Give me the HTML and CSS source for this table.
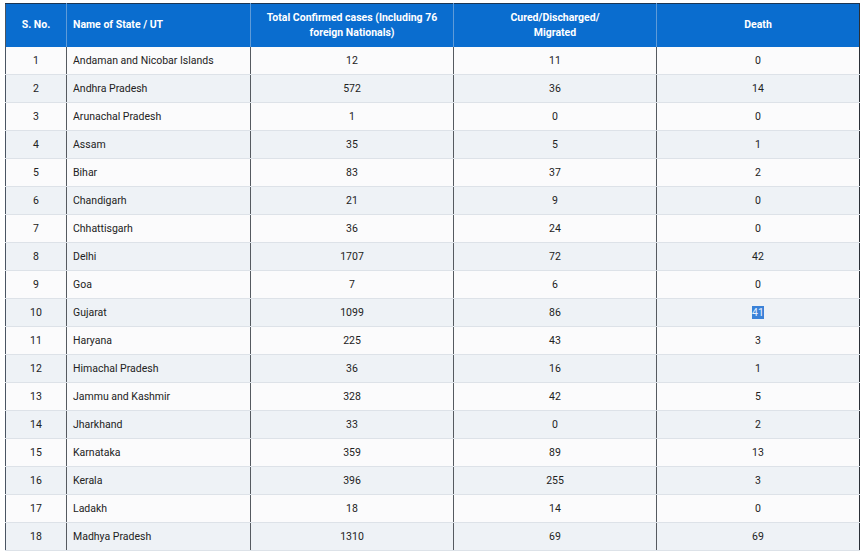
FILE: index.html
```html
<!DOCTYPE html>
<html>
<head>
<meta charset="utf-8">
<link rel="stylesheet" href="styles.css">
</head>
<body>
<table class="covid">
  <colgroup>
    <col class="c-sno"><col class="c-name"><col class="c-num"><col class="c-num"><col class="c-num">
  </colgroup>
  <thead>
    <tr>
      <th>S. No.</th>
      <th class="left">Name of State / UT</th>
      <th>Total Confirmed cases (Including 76<br>foreign Nationals)</th>
      <th>Cured/Discharged/<br>Migrated</th>
      <th>Death</th>
    </tr>
  </thead>
  <tbody>
    <tr><td>1</td><td class="left">Andaman and Nicobar Islands</td><td>12</td><td>11</td><td>0</td></tr>
    <tr><td>2</td><td class="left">Andhra Pradesh</td><td>572</td><td>36</td><td>14</td></tr>
    <tr><td>3</td><td class="left">Arunachal Pradesh</td><td>1</td><td>0</td><td>0</td></tr>
    <tr><td>4</td><td class="left">Assam</td><td>35</td><td>5</td><td>1</td></tr>
    <tr><td>5</td><td class="left">Bihar</td><td>83</td><td>37</td><td>2</td></tr>
    <tr><td>6</td><td class="left">Chandigarh</td><td>21</td><td>9</td><td>0</td></tr>
    <tr><td>7</td><td class="left">Chhattisgarh</td><td>36</td><td>24</td><td>0</td></tr>
    <tr><td>8</td><td class="left">Delhi</td><td>1707</td><td>72</td><td>42</td></tr>
    <tr><td>9</td><td class="left">Goa</td><td>7</td><td>6</td><td>0</td></tr>
    <tr><td>10</td><td class="left">Gujarat</td><td>1099</td><td>86</td><td><span class="sel">41</span></td></tr>
    <tr><td>11</td><td class="left">Haryana</td><td>225</td><td>43</td><td>3</td></tr>
    <tr><td>12</td><td class="left">Himachal Pradesh</td><td>36</td><td>16</td><td>1</td></tr>
    <tr><td>13</td><td class="left">Jammu and Kashmir</td><td>328</td><td>42</td><td>5</td></tr>
    <tr><td>14</td><td class="left">Jharkhand</td><td>33</td><td>0</td><td>2</td></tr>
    <tr><td>15</td><td class="left">Karnataka</td><td>359</td><td>89</td><td>13</td></tr>
    <tr><td>16</td><td class="left">Kerala</td><td>396</td><td>255</td><td>3</td></tr>
    <tr><td>17</td><td class="left">Ladakh</td><td>18</td><td>14</td><td>0</td></tr>
    <tr><td>18</td><td class="left">Madhya Pradesh</td><td>1310</td><td>69</td><td>69</td></tr>
  </tbody>
</table>
</body>
</html>
```

FILE: styles.css
```css
html, body {
  margin: 0;
  padding: 0;
  background: #ffffff;
}
body {
  padding: 3px 0 0 5px;
  font-family: Roboto, "Liberation Sans", sans-serif;
}
.covid {
  border-collapse: collapse;
  table-layout: fixed;
  width: 855px;
  font-size: 10.5px;
  color: #222;
  border-top: 1px solid #1b3553;
  border-left: 1px solid #4a5563;
  border-right: 1px solid #2a2f36;
}
.c-sno { width: 61px; }
.c-name { width: 184px; }
.c-num { width: 203px; }
.covid th {
  background: #0a6dcf;
  color: #ffffff;
  font-weight: 700;
  font-size: 10.5px;
  line-height: 15px;
  height: 43px;
  padding: 0 6px 1px;
  text-align: center;
  border-left: 1px solid #5f9bd8;
  box-sizing: border-box;
}
.covid th:first-child { border-left: none; }
.covid td {
  height: 28px;
  padding: 1px 7px 0;
  text-align: center;
  border-left: 1px solid #555a60;
  border-bottom: 1px solid #dde2e8;
  box-sizing: border-box;
  line-height: 14px;
}
.covid td:first-child { border-left: none; }
.covid .left { text-align: left; padding-left: 6px; }
.covid th.left { padding-left: 6px; }
.covid tbody tr:nth-child(odd) td { background: #fbfbfc; }
.covid tbody tr:nth-child(even) td { background: #eef2f6; }
.sel {
  background: #3a82d8;
  color: #e8f1ff;
}
```
